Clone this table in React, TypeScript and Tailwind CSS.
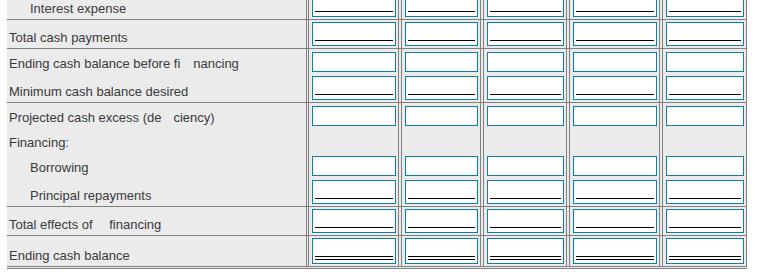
import React from "react";

type U = 0 | 1 | 2 | -1;

const colW = ["w-[91px]", "w-[80px]", "w-[84px]", "w-[91px]", "w-[85px]"];

function Box({ u }: { u: U }) {
  if (u === -1) return null;
  if (u === 0) {
    return <div className="h-[20px] border border-[#0b7ea3] bg-white" />;
  }
  if (u === 1) {
    return (
      <div className="h-[24px] border border-[#0b7ea3] bg-white flex flex-col justify-end px-[2px] pb-[4px]">
        <div className="h-px bg-black" />
      </div>
    );
  }
  return (
    <div className="h-[26px] border border-[#0b7ea3] bg-white flex flex-col justify-end px-[2px] pb-[3px]">
      <div className="h-[4px] border-y border-black" />
    </div>
  );
}

function Row({
  label,
  indent,
  u,
  rowCls,
  pt,
}: {
  label: React.ReactNode;
  indent?: boolean;
  u: U;
  rowCls: string;
  pt: string;
}) {
  return (
    <div className={`flex ${rowCls}`}>
      <div
        className={`w-[300px] shrink-0 border-r border-[#808080] flex items-end pb-[3px] leading-[15px] ${
          indent ? "pl-[23px]" : "pl-[2px]"
        }`}
      >
        <span>{label}</span>
      </div>
      <div className="flex gap-[2px] ml-[1px]">
        {colW.map((w, i) => (
          <div
            key={i}
            className={`${w} shrink-0 border-x border-[#808080] pl-[3px] pr-[2px] ${pt}`}
          >
            <Box u={u} />
          </div>
        ))}
      </div>
    </div>
  );
}

export default function App() {
  return (
    <div className="w-[765px] h-[275px] overflow-hidden bg-white font-['Liberation_Sans',Arial,sans-serif] text-[13px] text-[#3a3a3a]">
      <div className="ml-[7px] w-[740px] -mt-[9px] bg-[#ebebeb]">
        <Row
          label="Interest expense"
          indent
          u={1}
          pt="pt-[2px]"
          rowCls="h-[29px] border-b border-[#808080]"
        />
        <Row
          label="Total cash payments"
          u={1}
          pt="pt-[2px]"
          rowCls="h-[29px] border-b border-[#808080]"
        />
        <Row
          label={
            <>
              Ending cash balance before fi
              <span className="inline-block w-[13px]" />
              nancing
            </>
          }
          u={0}
          pt="pt-[3px]"
          rowCls="h-[25px]"
        />
        <Row
          label="Minimum cash balance desired"
          u={1}
          pt="pt-[2px]"
          rowCls="h-[29px] border-b border-[#808080]"
        />
        <Row
          label={
            <>
              Projected cash excess (de
              <span className="inline-block w-[12px]" />
              ciency)
            </>
          }
          u={0}
          pt="pt-[3px]"
          rowCls="h-[25px]"
        />
        <Row label="Financing:" u={-1} pt="pt-[3px]" rowCls="h-[25px]" />
        <Row label="Borrowing" indent u={0} pt="pt-[3px]" rowCls="h-[25px]" />
        <Row
          label="Principal repayments"
          indent
          u={1}
          pt="pt-[2px]"
          rowCls="h-[29px] border-b border-[#808080]"
        />
        <Row
          label={
            <>
              Total effects of <span className="inline-block w-[13px]" />
              financing
            </>
          }
          u={1}
          pt="pt-[2px]"
          rowCls="h-[29px] border-b border-[#808080]"
        />
        <Row
          label="Ending cash balance"
          u={2}
          pt="pt-[2px]"
          rowCls="h-[33px] border-b-[3px] border-double border-[#808080]"
        />
      </div>
    </div>
  );
}
